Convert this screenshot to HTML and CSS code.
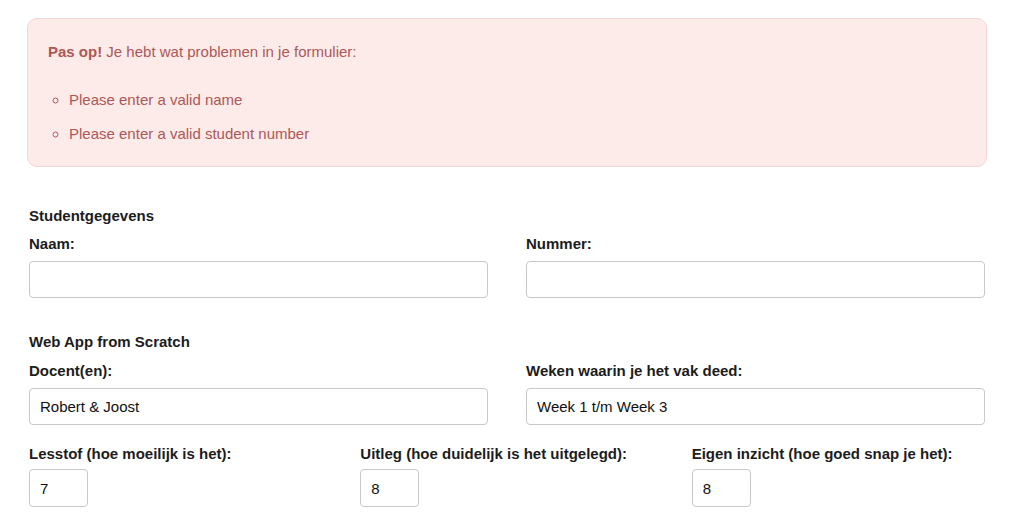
FILE: index.html
```html
<!DOCTYPE html>
<html lang="nl">
<head>
<meta charset="utf-8">
<title>Formulier</title>
<link rel="stylesheet" href="styles.css">
</head>
<body>
<div class="page">
  <div class="alert">
    <p class="alert-title"><strong>Pas op!</strong> Je hebt wat problemen in je formulier:</p>
    <ul class="alert-list">
      <li>Please enter a valid name</li>
      <li>Please enter a valid student number</li>
    </ul>
  </div>

  <form class="form">
    <section class="section">
      <h3 class="section-title">Studentgegevens</h3>
      <div class="row two">
        <div class="field">
          <label class="label">Naam:</label>
          <input class="input" type="text" value="">
        </div>
        <div class="field">
          <label class="label">Nummer:</label>
          <input class="input" type="text" value="">
        </div>
      </div>
    </section>

    <section class="section">
      <h3 class="section-title">Web App from Scratch</h3>
      <div class="row two">
        <div class="field">
          <label class="label">Docent(en):</label>
          <input class="input" type="text" value="Robert &amp; Joost">
        </div>
        <div class="field">
          <label class="label">Weken waarin je het vak deed:</label>
          <input class="input" type="text" value="Week 1 t/m Week 3">
        </div>
      </div>
      <div class="row three">
        <div class="field">
          <label class="label">Lesstof (hoe moeilijk is het):</label>
          <input class="input small" type="text" value="7">
        </div>
        <div class="field">
          <label class="label">Uitleg (hoe duidelijk is het uitgelegd):</label>
          <input class="input small" type="text" value="8">
        </div>
        <div class="field">
          <label class="label">Eigen inzicht (hoe goed snap je het):</label>
          <input class="input small" type="text" value="8">
        </div>
      </div>
    </section>
  </form>
</div>
</body>
</html>
```

FILE: styles.css
```css
* { box-sizing: border-box; }
html, body { margin: 0; padding: 0; background: #fff; }
body {
  font-family: "Liberation Sans", Arial, Helvetica, sans-serif;
  font-size: 15px;
  line-height: 20px;
  color: #1c1c1c;
}
.page {
  width: 960px;
  margin-left: 27px;
  padding-top: 18px;
}
.alert {
  background: #fdebea;
  border: 1px solid #f1d6d5;
  border-radius: 10px;
  color: #ad5756;
  padding: 23px 20px 22px 20px;
}
.alert-title { margin: 0; }
.alert-title strong { font-weight: bold; }
.alert-list {
  list-style: circle;
  margin: 28px 0 0 0;
  padding-left: 21px;
}
.alert-list li { padding-left: 0; }
.alert-list li + li { margin-top: 14px; }

.form { margin: 0 2px; }
.section { margin-top: 39px; }
.section + .section { margin-top: 34px; }
.section-title {
  margin: 0 0 8px 0;
  font-size: 15px;
  line-height: 20px;
  font-weight: bold;
}
.section + .section .section-title { margin-bottom: 9px; }
.row { display: grid; column-gap: 38px; }
.row.two { grid-template-columns: 1fr 1fr; }
.row.three { grid-template-columns: 1fr 1fr 1fr; margin-top: 19px; }
.field { display: flex; flex-direction: column; align-items: flex-start; }
.label {
  font-weight: bold;
  margin-bottom: 7px;
}
.row.three .label { margin-bottom: 5px; }
.input {
  width: 100%;
  height: 37px;
  border: 1px solid #c9c9c9;
  border-radius: 4px;
  padding: 0 10px;
  font-family: "Liberation Sans", Arial, Helvetica, sans-serif;
  font-size: 15px;
  color: #111;
  background: #fff;
  outline: none;
}
.input.small { width: 59px; height: 38px; }
```
